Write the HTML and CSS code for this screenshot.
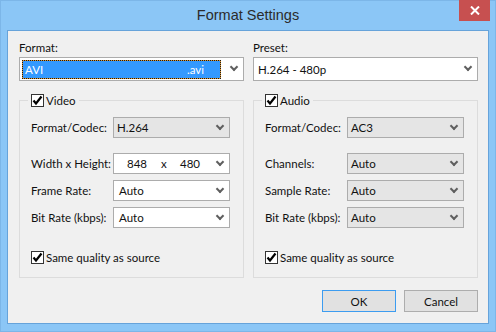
FILE: index.html
```html
<!DOCTYPE html>
<html lang="en">
<head>
  <meta charset="UTF-8" />
  <title>Format Settings</title>
  <link rel="stylesheet" href="styles.css">
</head>
<body>
  <div class="window">
    <div class="titlebar">
      <span class="title">Format Settings</span>
      <button class="close">
        <svg width="10" height="9" viewBox="0 0 10 9"><path d="M1 0.5 L9 8.5 M9 0.5 L1 8.5" stroke="#fff" stroke-width="2" fill="none"/></svg>
      </button>
    </div>

    <div class="client">
      <div class="top-row">
        <div class="field">
          <label>Format:</label>
          <div class="combo combo-format">
            <span class="selection"><span>AVI</span><span>.avi</span></span>
            <span class="arrow"></span>
          </div>
        </div>
        <div class="field">
          <label>Preset:</label>
          <div class="combo combo-preset">
            <span class="value">H.264 - 480p</span>
            <span class="arrow"></span>
          </div>
        </div>
      </div>

      <div class="groups">
        <fieldset class="group">
          <legend><span class="check"><svg width="11" height="11" viewBox="0 0 11 11"><path d="M1.5 5.5 L4 8.5 L9.5 1.5" stroke="#000" stroke-width="2.2" fill="none"/></svg></span>Video</legend>
          <div class="row first">
            <span class="lbl">Format/Codec:</span>
            <div class="combo gray"><span class="value">H.264</span><span class="arrow"></span></div>
          </div>
          <div class="row second">
            <span class="lbl">Width x Height:</span>
            <div class="combo white">
              <span class="size"><span class="w">848</span><span class="x">x</span><span>480</span></span>
              <span class="arrow"></span>
            </div>
          </div>
          <div class="row">
            <span class="lbl">Frame Rate:</span>
            <div class="combo white"><span class="value">Auto</span><span class="arrow"></span></div>
          </div>
          <div class="row">
            <span class="lbl">Bit Rate (kbps):</span>
            <div class="combo white"><span class="value">Auto</span><span class="arrow"></span></div>
          </div>
          <div class="same">
            <span class="check"><svg width="11" height="11" viewBox="0 0 11 11"><path d="M1.5 5.5 L4 8.5 L9.5 1.5" stroke="#000" stroke-width="2.2" fill="none"/></svg></span>Same quality as source
          </div>
        </fieldset>

        <fieldset class="group">
          <legend><span class="check"><svg width="11" height="11" viewBox="0 0 11 11"><path d="M1.5 5.5 L4 8.5 L9.5 1.5" stroke="#000" stroke-width="2.2" fill="none"/></svg></span>Audio</legend>
          <div class="row first">
            <span class="lbl">Format/Codec:</span>
            <div class="combo gray"><span class="value">AC3</span><span class="arrow"></span></div>
          </div>
          <div class="row second">
            <span class="lbl">Channels:</span>
            <div class="combo gray"><span class="value">Auto</span><span class="arrow"></span></div>
          </div>
          <div class="row">
            <span class="lbl">Sample Rate:</span>
            <div class="combo gray"><span class="value">Auto</span><span class="arrow"></span></div>
          </div>
          <div class="row">
            <span class="lbl">Bit Rate (kbps):</span>
            <div class="combo gray"><span class="value">Auto</span><span class="arrow"></span></div>
          </div>
          <div class="same">
            <span class="check"><svg width="11" height="11" viewBox="0 0 11 11"><path d="M1.5 5.5 L4 8.5 L9.5 1.5" stroke="#000" stroke-width="2.2" fill="none"/></svg></span>Same quality as source
          </div>
        </fieldset>
      </div>

      <div class="buttons">
        <button class="btn ok">OK</button>
        <button class="btn">Cancel</button>
      </div>
    </div>
  </div>
</body>
</html>
```

FILE: styles.css
```css
* {
  margin: 0;
  padding: 0;
  box-sizing: border-box;
}
body {
  font-family: 'Lato', 'Liberation Sans', sans-serif;
  font-size: 11.5px;
  color: #111;
}
.window {
  width: 496px;
  height: 332px;
  background: #8bc6f6;
  box-shadow: inset 0 0 0 1px #7cb6e8;
  padding: 0 7px 8px 7px;
  display: flex;
  flex-direction: column;
}
.titlebar {
  height: 30px;
  position: relative;
  text-align: center;
}
.title {
  font-family: 'Liberation Sans', sans-serif;
  font-size: 14.5px;
  line-height: 30px;
  color: #2b2b2b;
}
.close {
  position: absolute;
  top: 0;
  right: -1px;
  width: 31px;
  height: 21px;
  border: none;
  background: #c75050;
  display: flex;
  align-items: center;
  justify-content: center;
}
.client {
  flex: 1;
  background: #f0f0f0;
  border: 1px solid #66a3da;
  padding: 9px 10px 11px 11px;
  display: flex;
  flex-direction: column;
}
.top-row {
  display: grid;
  grid-template-columns: 225px 225px;
  column-gap: 9px;
}
.field label {
  display: block;
  line-height: 15px;
  margin-bottom: 2px;
}
.combo {
  display: flex;
  align-items: center;
  height: 21px;
  border: 1px solid #acacac;
  background: #fff;
  white-space: nowrap;
}
.combo .value {
  flex: 1;
  padding-left: 4px;
}
.combo.gray {
  background: #e5e5e5;
}
.combo.gray .value {
  padding-left: 3px;
}
.combo.white .value {
  padding-left: 5px;
}
.arrow {
  width: 6px;
  height: 6px;
  border-right: 2px solid #5f5f5f;
  border-bottom: 2px solid #5f5f5f;
  transform: rotate(45deg);
  margin: 0 6px 4px 8px;
}
.combo-format,
.combo-preset {
  height: 24px;
}
.combo-format {
  padding: 1px 0 1px 2px;
}
.selection {
  flex: 1;
  height: 19px;
  display: flex;
  align-items: center;
  justify-content: space-between;
  padding: 0 16px 0 2px;
  color: #fff;
  border: 1px dotted #1a1a1a;
  background: linear-gradient(#3399ff, #3399ff) padding-box, linear-gradient(#e0962e, #e0962e) border-box;
}
.combo-format .arrow {
  margin-left: 10px;
}
.combo-preset .value {
  padding-left: 4px;
}
.groups {
  display: grid;
  grid-template-columns: 225px 225px;
  column-gap: 9px;
  margin-top: 12px;
}
.group {
  border: 1px solid #dcdcdc;
  padding: 9px 13px 12px 11px;
}
.group legend {
  display: flex;
  align-items: center;
  line-height: 15px;
  padding: 0 3px;
  margin-left: -3px;
}
.check {
  width: 13px;
  height: 13px;
  border: 1px solid #333;
  background: #fff;
  display: inline-flex;
  align-items: center;
  justify-content: center;
  margin-right: 2px;
}
.row {
  display: grid;
  grid-template-columns: 82px 1fr;
  align-items: center;
  margin-top: 6px;
}
.lbl {
  white-space: nowrap;
}
.row.first {
  margin-top: 0;
}
.row.second {
  margin-top: 15px;
}
.size {
  flex: 1;
  display: flex;
  padding-left: 13px;
}
.size .w {
  width: 34px;
}
.size .x {
  width: 19px;
}
.same {
  display: flex;
  align-items: center;
  line-height: 15px;
  margin-top: 22px;
}
.buttons {
  display: flex;
  justify-content: flex-end;
  gap: 8px;
  margin-top: 12px;
}
.btn {
  width: 74px;
  height: 22px;
  border: 1px solid #adadad;
  background: #e1e1e1;
  font-family: 'Lato', 'Liberation Sans', sans-serif;
  font-size: 11.5px;
  color: #111;
}
.btn.ok {
  border-color: #3c9cf0;
}
```
